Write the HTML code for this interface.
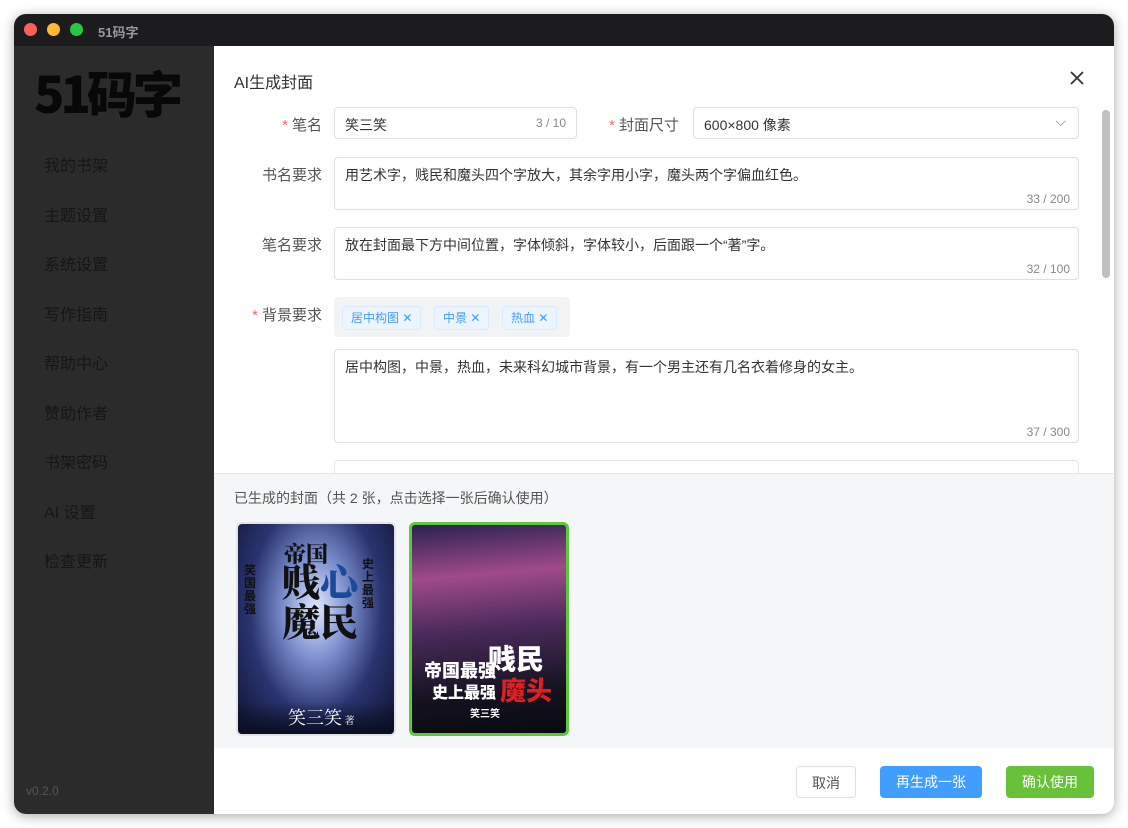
<!DOCTYPE html><html><head><meta charset="utf-8"><style>
*{box-sizing:border-box;margin:0;padding:0}
body{width:1128px;height:828px;background:#fff;font-family:"Liberation Sans","Noto Sans CJK SC",sans-serif;position:relative;overflow:hidden}
.win{position:absolute;left:14px;top:14px;width:1100px;height:800px;border-radius:12px;overflow:hidden;box-shadow:0 2px 12px rgba(0,0,0,.35);background:#fff}
.tb{position:absolute;left:0;top:0;width:1100px;height:32px;background:#1c1c1e}
.dot{position:absolute;top:9px;width:13px;height:13px;border-radius:50%}
.side{position:absolute;left:0;top:32px;width:200px;height:768px;background:#2b2b2b}
.logo{position:absolute;left:20px;top:10px;font-size:50px;font-weight:900;color:#080808;letter-spacing:-4px;font-family:"Noto Sans CJK SC",sans-serif;white-space:nowrap}
.nav{position:absolute;left:30px;font-size:16px;color:#161616}
.lbl{position:absolute;right:0;font-size:15px;color:#555;text-align:right}
.r{color:#f56c6c;margin-right:4px}
.inp{position:absolute;border:1px solid #dcdfe6;border-radius:4px;font-size:14px;color:#333;padding:7px 10px}
.cnt{position:absolute;right:8px;bottom:3px;font-size:12px;color:#888}
.tag{position:absolute;top:260px;height:24px;background:#ecf5ff;border:1px solid #d9ecff;border-radius:4px;color:#409eff;font-size:12px;line-height:22px;padding:0 8px}
.btn{position:absolute;top:720px;height:32px;border-radius:4px;font-size:14px;line-height:32px;text-align:center}
.cov{position:absolute;top:476px;width:160px;height:214px;border-radius:6px;overflow:hidden}
</style></head><body>
<div class="win">
<div class="tb"><div class="dot" style="left:10px;background:#fe5f57"></div><div class="dot" style="left:33px;background:#febc2e"></div><div class="dot" style="left:56px;background:#28c840"></div>
<div style="position:absolute;left:84px;top:8px;font-size:13px;color:#999;font-weight:bold">51码字</div></div>
<div class="side"><div class="logo">51码字</div>
<div class="nav" style="top:106px">我的书架</div><div class="nav" style="top:156px">主题设置</div><div class="nav" style="top:205px">系统设置</div><div class="nav" style="top:255px">写作指南</div><div class="nav" style="top:304px">帮助中心</div><div class="nav" style="top:354px">赞助作者</div><div class="nav" style="top:403px">书架密码</div><div class="nav" style="top:453px">AI 设置</div><div class="nav" style="top:502px">检查更新</div>
<div style="position:absolute;left:12px;top:738px;font-size:12px;color:#555">v0.2.0</div></div>
</div>
<div style="position:absolute;left:214px;top:46px;width:900px;height:768px;overflow:hidden;border-bottom-right-radius:12px">
<div style="position:absolute;left:20px;top:23px;font-size:16px;color:#303133">AI生成封面</div>
<svg style="position:absolute;left:856px;top:25px" width="14" height="14" viewBox="0 0 14 14"><path d="M1 1L13 13M13 1L1 13" stroke="#333" stroke-width="1.8"/></svg>
<div style="position:absolute;left:0;width:108px;top:68px;height:400px">
<div class="lbl" style="top:0"><span class="r">*</span>笔名</div>
<div class="lbl" style="top:50px">书名要求</div>
<div class="lbl" style="top:120px">笔名要求</div>
<div class="lbl" style="top:190px"><span class="r">*</span>背景要求</div></div>
<div class="inp" style="left:120px;top:61px;width:243px;height:32px">笑三笑<span style="position:absolute;right:10px;top:8px;font-size:12px;color:#888">3 / 10</span></div>
<div class="lbl" style="left:395px;top:68px;width:70px;right:auto"><span class="r">*</span>封面尺寸</div>
<div class="inp" style="left:479px;top:61px;width:386px;height:32px">600×800 像素<span style="position:absolute;right:12px;top:5px;color:#888">⌵</span></div>
<div class="inp" style="left:120px;top:111px;width:745px;height:53px">用艺术字，贱民和魔头四个字放大，其余字用小字，魔头两个字偏血红色。<span class="cnt">33 / 200</span></div>
<div class="inp" style="left:120px;top:181px;width:745px;height:53px">放在封面最下方中间位置，字体倾斜，字体较小，后面跟一个“著”字。<span class="cnt">32 / 100</span></div>
<div style="position:absolute;left:120px;top:251px;width:236px;height:40px;background:#f2f3f5;border-radius:4px"></div>
<div class="tag" style="left:128px">居中构图 ✕</div><div class="tag" style="left:220px">中景 ✕</div><div class="tag" style="left:288px">热血 ✕</div>
<div class="inp" style="left:120px;top:303px;width:745px;height:94px">居中构图，中景，热血，未来科幻城市背景，有一个男主还有几名衣着修身的女主。<span class="cnt">37 / 300</span></div>
<div style="position:absolute;left:120px;top:414px;width:745px;height:20px;border:1px solid #e4e7ed;border-radius:4px"></div>
<div style="position:absolute;left:888px;top:64px;width:8px;height:168px;background:#c1c1c1;border-radius:4px"></div>
<div style="position:absolute;left:0;top:427px;width:900px;height:275px;background:#f5f6f7;border-top:1px solid #e6e6e6"></div>
<div style="position:absolute;left:20px;top:442px;font-size:14px;color:#555">已生成的封面（共 2 张，点击选择一张后确认使用）</div>
<div class="cov" style="left:22px;border:2px solid #e3e3e3;background:radial-gradient(ellipse at 50% 40%,#dfe8ff 0,#7a8ccc 30%,#2a3470 60%,#0e1230 100%)">
<div style="position:absolute;left:46px;top:14px;font-size:22px;font-weight:900;color:#111;font-family:'Noto Serif CJK SC',serif">帝国</div>
<div style="position:absolute;left:44px;top:36px;font-size:38px;font-weight:900;color:#111;line-height:40px;font-family:'Noto Serif CJK SC',serif">贱<span style="color:#1a4a9a">心</span><br>魔民</div>
<div style="position:absolute;left:6px;top:40px;width:14px;font-size:12px;font-weight:bold;color:#111;line-height:13px">笑国最强</div>
<div style="position:absolute;left:124px;top:34px;width:14px;font-size:12px;font-weight:bold;color:#111;line-height:13px">史上最强</div>
<div style="position:absolute;left:0;top:178px;width:156px;height:32px;background:linear-gradient(transparent,#0a0e22)"></div>
<div style="position:absolute;left:50px;top:180px;font-size:18px;color:#fff;font-family:'Noto Serif CJK SC',serif">笑三笑<small style="font-size:10px"> 著</small></div></div>
<div class="cov" style="left:195px;border:3px solid #5cc83a;background:linear-gradient(175deg,#2a2250,#a04a8a 25%,#4a2a5a 50%,#141220 80%,#0a0a10)">
<div style="position:absolute;left:76px;top:120px;white-space:nowrap;font-weight:900;color:#fff;font-size:28px;line-height:30px">贱民</div>
<div style="position:absolute;left:12px;top:132px;white-space:nowrap;font-size:18px;font-weight:900;color:#fff">帝国最强</div>
<div style="position:absolute;left:20px;top:154px;white-space:nowrap;font-size:16px;font-weight:900;color:#fff">史上最强</div>
<div style="position:absolute;left:88px;top:146px;white-space:nowrap;font-size:26px;font-weight:900;color:#e02020">魔头</div>
<div style="position:absolute;left:58px;top:180px;font-size:10px;color:#fff;font-weight:bold">笑三笑</div></div>
<div class="btn" style="left:582px;width:60px;border:1px solid #dcdfe6;color:#555;background:#fff">取消</div>
<div class="btn" style="left:666px;width:102px;background:#409eff;color:#fff">再生成一张</div>
<div class="btn" style="left:792px;width:88px;background:#67c23a;color:#fff">确认使用</div>
</div>
</body></html>
